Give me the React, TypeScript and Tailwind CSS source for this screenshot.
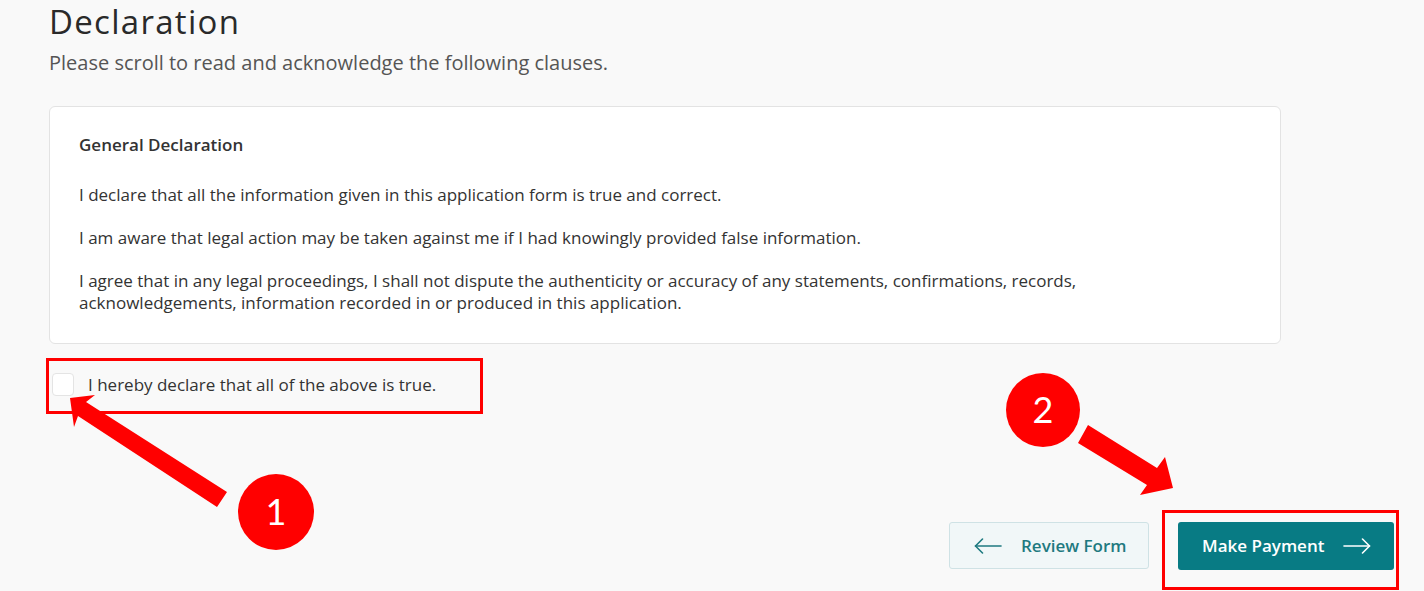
import React, { useState } from "react";

function ArrowLeft() {
  return (
    <svg width="28" height="16" viewBox="0 0 28 16" fill="none" stroke="currentColor" strokeWidth="1.6" strokeLinecap="round" strokeLinejoin="round">
      <path d="M27 8H1.5" />
      <path d="M8.5 1 1.5 8l7 7" />
    </svg>
  );
}

function ArrowRight() {
  return (
    <svg width="28" height="16" viewBox="0 0 28 16" fill="none" stroke="currentColor" strokeWidth="1.6" strokeLinecap="round" strokeLinejoin="round">
      <path d="M1 8h25.5" />
      <path d="M19.5 1l7 7-7 7" />
    </svg>
  );
}

// red call-outs drawn over the page
function Annotations() {
  return (
    <svg className="pointer-events-none absolute left-0 top-0" width="1424" height="591" viewBox="0 0 1424 591">
      <rect x="47.5" y="359.5" width="434" height="53" fill="none" stroke="#ff0000" strokeWidth="3" />
      <rect x="1163.5" y="511.5" width="234" height="77" fill="none" stroke="#ff0000" strokeWidth="3" />
      <polygon points="70,398 95,395 86,402 227,492 217,507 78,416 74,427" fill="#ff0000" />
      <polygon points="1173,488 1140,495 1147,485 1078,443 1088,425 1157,468 1165,457" fill="#ff0000" />
      <circle cx="276" cy="512" r="38" fill="#ff0000" />
      <circle cx="1043" cy="410" r="37" fill="#ff0000" />
      <text x="276" y="525" textAnchor="middle" fill="#fff" fontFamily="Lato, sans-serif" fontSize="36">1</text>
      <text x="1043" y="423" textAnchor="middle" fill="#fff" fontFamily="Lato, sans-serif" fontSize="36">2</text>
    </svg>
  );
}

export default function App() {
  const [agreed, setAgreed] = useState(false);

  return (
    <div className="relative h-[591px] w-[1424px] overflow-hidden bg-[#f9f9f9] font-['Open_Sans',sans-serif] text-[#333]">
      <div className="flex flex-col px-[49px] pt-[2px]">
        <h1 className="text-[33px] font-medium leading-[40px] tracking-[1.3px] text-[#2a2a2a]">Declaration</h1>
        <p className="mt-[8px] text-[20px] leading-[26px] text-[#555]">
          Please scroll to read and acknowledge the following clauses.
        </p>

        <div className="mt-[30px] w-[1232px] rounded-[6px] border border-[#e3e3e3] bg-white px-[29px] pb-[29px] pt-[26px]">
          <h2 className="text-[17px] font-semibold leading-[24px] text-[#333]">General Declaration</h2>
          <div className="mt-[27px] flex flex-col gap-[21px] text-[17px] leading-[22px] text-[#333]">
            <p>I declare that all the information given in this application form is true and correct.</p>
            <p>I am aware that legal action may be taken against me if I had knowingly provided false information.</p>
            <p>
              I agree that in any legal proceedings, I shall not dispute the authenticity or accuracy of any statements, confirmations, records,
              <br />
              acknowledgements, information recorded in or produced in this application.
            </p>
          </div>
        </div>

        <label className="mt-[29px] flex cursor-pointer items-center gap-[14px] pl-[3px]">
          <input
            type="checkbox"
            checked={agreed}
            onChange={(e) => setAgreed(e.target.checked)}
            className="h-[23px] w-[22px] appearance-none rounded-[4px] border border-[#e4e4e4] bg-white"
          />
          <span className="text-[17px] leading-[22px] text-[#333]">I hereby declare that all of the above is true.</span>
        </label>

        <div className="mr-[-19px] mt-[126px] flex justify-end gap-[29px]">
          <button className="flex h-[47px] w-[200px] items-center gap-[19px] rounded-[3px] border border-[#cfe2e5] bg-[#f1f7f8] pl-[24px] text-[17px] font-semibold text-[#1f7a80]">
            <ArrowLeft />
            Review Form
          </button>
          <button className="flex h-[48px] w-[216px] items-center justify-between rounded-[3px] bg-[#087b84] pl-[24px] pr-[23px] text-[17px] font-semibold text-white">
            Make Payment
            <ArrowRight />
          </button>
        </div>
      </div>
      <Annotations />
    </div>
  );
}
